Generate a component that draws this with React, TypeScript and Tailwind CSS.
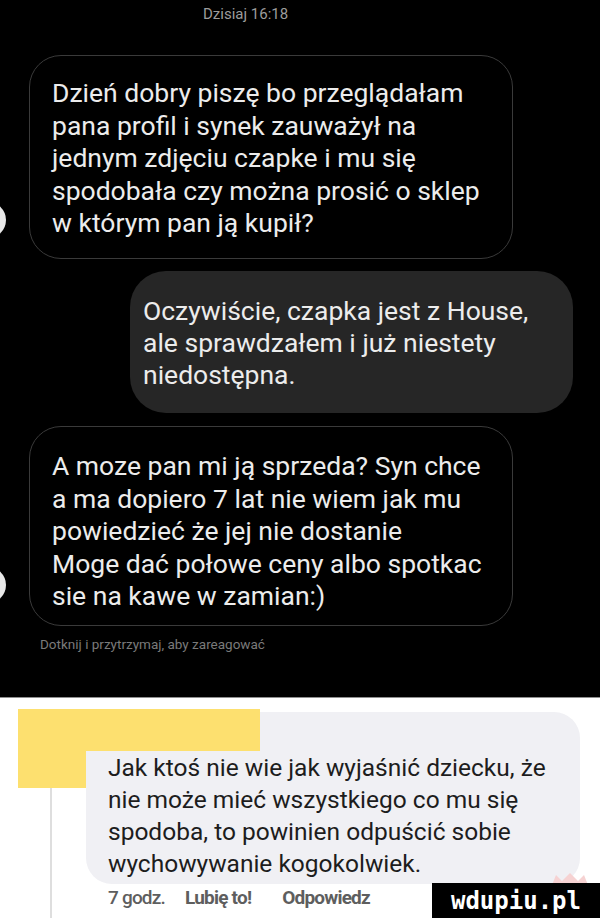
const incoming1 = [
  'Dzień dobry piszę bo przeglądałam',
  'pana profil i synek zauważył na',
  'jednym zdjęciu czapke i mu się',
  'spodobała czy można prosić o sklep',
  'w którym pan ją kupił?',
];

const outgoing = [
  'Oczywiście, czapka jest z House,',
  'ale sprawdzałem i już niestety',
  'niedostępna.',
];

const incoming2 = [
  'A moze pan mi ją sprzeda? Syn chce',
  'a ma dopiero 7 lat nie wiem jak mu',
  'powiedzieć że jej nie dostanie',
  'Moge dać połowe ceny albo spotkac',
  'sie na kawe w zamian:)',
];

const comment = [
  'Jak ktoś nie wie jak wyjaśnić dziecku, że',
  'nie może mieć wszystkiego co mu się',
  'spodoba, to powinien odpuścić sobie',
  'wychowywanie kogokolwiek.',
];

const Lines = ({ lines }: { lines: string[] }) => (
  <>
    {lines.map((l) => (
      <p key={l} className="whitespace-nowrap">
        {l}
      </p>
    ))}
  </>
);

export default function App() {
  return (
    <div className="flex h-[918px] w-[600px] flex-col overflow-hidden bg-white font-['Roboto',sans-serif]">
      {/* chat screenshot */}
      <div className="relative flex h-[698px] shrink-0 flex-col border-b border-[#8f8f8f] bg-black">
        <p className="pl-[203px] pt-[4px] text-[15px] leading-[20px] text-[#9c9c9c]">
          Dzisiaj 16:18
        </p>

        <div className="ml-[29px] mt-[31px] h-[204px] w-[484px] rounded-[32px] border-[1.5px] border-[#3a3a3a] pl-[22px] pt-[21px] text-[26.5px] leading-[32.5px] text-[#ececec]">
          <Lines lines={incoming1} />
        </div>

        <div className="ml-[130px] mt-[12px] h-[142px] w-[443px] rounded-[36px] bg-[#262626] pl-[13px] pt-[24px] text-[26.5px] leading-[32px] text-[#ececec]">
          <Lines lines={outgoing} />
        </div>

        <div className="ml-[29px] mt-[13px] h-[200px] w-[484px] rounded-[32px] border-[1.5px] border-[#3a3a3a] pl-[22px] pt-[23px] text-[26.5px] leading-[32.5px] text-[#ececec]">
          <Lines lines={incoming2} />
        </div>

        <p className="ml-[40px] mt-[9px] text-[13.5px] leading-[18px] text-[#7a7a7a]">
          Dotknij i przytrzymaj, aby zareagować
        </p>

        {/* avatar edges */}
        <div className="absolute left-[-30px] top-[202px] h-[36px] w-[36px] rounded-full bg-[#e8e8e8]" />
        <div className="absolute left-[-30px] top-[567px] h-[36px] w-[36px] rounded-full bg-[#e8e8e8]" />
      </div>

      {/* facebook comment */}
      <div className="relative flex flex-1 flex-col pt-[14px]">
        <div className="absolute left-[50px] top-[90px] h-[140px] w-[2px] bg-[#dedede]" />

        <div className="ml-[86px] w-[494px] rounded-[26px] bg-[#f0f0f4] pb-[4px] pl-[22px] pt-[40px] text-[24.5px] leading-[32px] text-[#1d1d1d]">
          <Lines lines={comment} />
        </div>

        <div className="ml-[108px] mt-[2px] flex text-[19px] font-bold leading-[24px] tracking-[-0.8px] text-[#5e5e5e]">
          <span className="font-medium">7 godz.</span>
          <span className="ml-[20px]">Lubię to!</span>
          <span className="ml-[31px]">Odpowiedz</span>
        </div>

        {/* yellow censor block */}
        <div className="absolute left-[18px] top-[11px] h-[42px] w-[242px] bg-[#fde06f]" />
        <div className="absolute left-[18px] top-[53px] h-[37px] w-[68px] bg-[#fde06f]" />

        {/* faded reaction behind watermark */}
        <svg className="absolute bottom-[33px] right-[10px]" width="40" height="14" viewBox="0 0 40 14">
          <path d="M2 14 L6 4 L12 10 L20 2 L28 10 L34 4 L38 14 Z" fill="#f6d2d2" />
        </svg>

        {/* watermark */}
        <div className="absolute bottom-0 right-0 flex h-[35px] w-[168px] items-center justify-center bg-black font-['DejaVu_Sans_Mono',monospace] text-[24px] font-bold leading-none text-white">
          wdupiu.pl
        </div>
      </div>
    </div>
  );
}
